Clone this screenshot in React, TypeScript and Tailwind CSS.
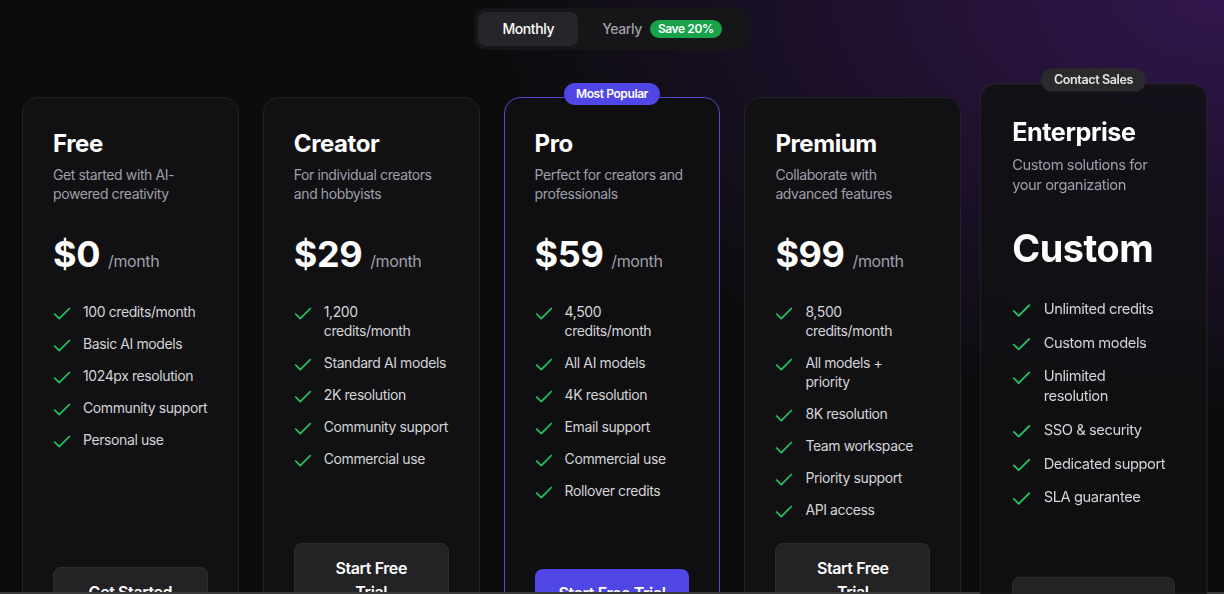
import { Check } from "lucide-react";

type Plan = {
  name: string;
  desc: string;
  price: string;
  perMonth?: boolean;
  features: string[];
  cta: string;
  badge?: string;
  variant?: "popular" | "enterprise";
};

// line breaks follow the original layout
const PLANS: Plan[] = [
  {
    name: "Free",
    desc: "Get started with AI-powered creativity",
    price: "$0",
    perMonth: true,
    features: ["100 credits/month", "Basic AI models", "1024px resolution", "Community support", "Personal use"],
    cta: "Get Started",
  },
  {
    name: "Creator",
    desc: "For individual creators and hobbyists",
    price: "$29",
    perMonth: true,
    features: ["1,200\ncredits/month", "Standard AI models", "2K resolution", "Community support", "Commercial use"],
    cta: "Start Free Trial",
  },
  {
    name: "Pro",
    desc: "Perfect for creators and professionals",
    price: "$59",
    perMonth: true,
    features: ["4,500\ncredits/month", "All AI models", "4K resolution", "Email support", "Commercial use", "Rollover credits"],
    cta: "Start Free Trial",
    badge: "Most Popular",
    variant: "popular",
  },
  {
    name: "Premium",
    desc: "Collaborate with advanced features",
    price: "$99",
    perMonth: true,
    features: ["8,500\ncredits/month", "All models +\npriority", "8K resolution", "Team workspace", "Priority support", "API access"],
    cta: "Start Free Trial",
  },
  {
    name: "Enterprise",
    desc: "Custom solutions for your organization",
    price: "Custom",
    features: ["Unlimited credits", "Custom models", "Unlimited\nresolution", "SSO & security", "Dedicated support", "SLA guarantee"],
    cta: "Contact Sales",
    badge: "Contact Sales",
    variant: "enterprise",
  },
];

function PlanCard({ plan }: { plan: Plan }) {
  const popular = plan.variant === "popular";
  const enterprise = plan.variant === "enterprise";
  return (
    <div
      className={`relative flex flex-col rounded-2xl border px-[30px] pb-8 pt-[30px] ${
        popular
          ? "border-[#5049c9] bg-[#0f0f11]"
          : enterprise
          ? "z-10 scale-105 border-[#28262c] bg-[#111113]/85"
          : "border-[#222226] bg-[#111113]"
      }`}
    >
      {plan.badge && (
        <span
          className={`absolute -top-[15px] left-1/2 -translate-x-1/2 whitespace-nowrap rounded-full px-3 py-[3px] text-xs font-semibold leading-4 ${
            popular ? "bg-[#4f46e5] text-white" : "bg-[#2a2a2d] text-zinc-200"
          }`}
        >
          {plan.badge}
        </span>
      )}
      <h3 className="text-2xl font-bold leading-8 text-white">{plan.name}</h3>
      <p className="mt-[5px] text-sm leading-[19px] text-zinc-400">{plan.desc}</p>
      <div className="mt-[31px] flex items-baseline gap-2">
        <span className="text-4xl font-bold leading-10 text-white">{plan.price}</span>
        {plan.perMonth && <span className="text-base text-zinc-400">/month</span>}
      </div>
      <ul className="mt-7 space-y-[13px]">
        {plan.features.map((f) => (
          <li key={f} className="flex items-start gap-[10px] text-sm leading-[19px] text-zinc-300">
            <Check size={22} strokeWidth={1.9} className="-mb-[4px] -ml-[2px] mt-px shrink-0 text-[#22c55e]" />
            <span className="whitespace-pre-line">{f}</span>
          </li>
        ))}
      </ul>
      <div className="mt-auto pt-6">
        <button
          className={`w-full rounded-lg py-3 text-base font-semibold leading-6 text-white ${
            popular
              ? "bg-[#4f46e5] px-4"
              : enterprise
              ? "border border-[#2e2e32] bg-[#232326] px-3"
              : "border border-[#2e2e32] bg-[#232326] px-7"
          }`}
        >
          {plan.cta}
        </button>
      </div>
    </div>
  );
}

export default function App() {
  return (
    <div
      className="min-h-screen overflow-hidden bg-[#0c0c0e] bg-[radial-gradient(ellipse_at_100%_0%,rgba(80,30,130,0.55),rgba(12,12,14,0)_42%)] pb-10 pt-2 tracking-tight"
      style={{ fontFamily: "Inter, 'Noto Sans', sans-serif" }}
    >
      <div className="flex justify-center">
        <div className="flex items-center rounded-xl bg-[#161618] p-1">
          <button className="rounded-lg bg-[#26262a] px-6 py-2 text-sm font-medium leading-[18px] text-white">
            Monthly
          </button>
          <button className="flex items-center gap-2 px-6 py-2 text-sm font-medium leading-[18px] text-zinc-400">
            Yearly
            <span className="rounded-full bg-[#16a34a] px-2 py-[1px] text-xs font-semibold leading-4 text-white">
              Save 20%
            </span>
          </button>
        </div>
      </div>

      <div className="mt-[47px] grid grid-cols-5 gap-6 px-[22px]">
        {PLANS.map((p) => (
          <PlanCard key={p.name} plan={p} />
        ))}
      </div>

      <div className="fixed bottom-0 left-0 right-0 h-[2px] bg-[#3a3a3d]" />
    </div>
  );
}
